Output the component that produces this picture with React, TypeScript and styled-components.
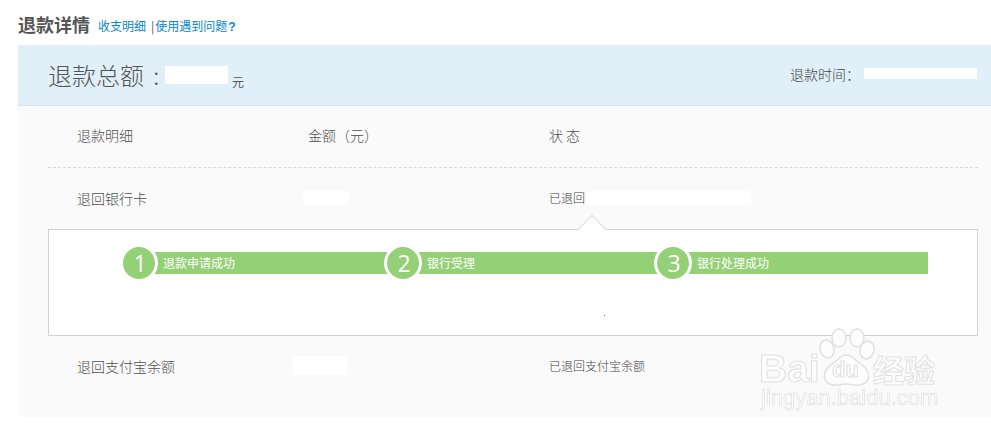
import React from 'react';
import styled, { createGlobalStyle } from 'styled-components';

const GlobalStyle = createGlobalStyle`
  html, body {
    margin: 0;
    padding: 0;
    background: #fff;
  }
  body {
    font-family: "Noto Sans CJK SC", "Liberation Sans", sans-serif;
    color: #666;
    font-size: 12px;
  }
`;

const steps = [
  { num: 1, label: '退款申请成功', width: 264 },
  { num: 2, label: '银行受理', width: 270 },
  { num: 3, label: '银行处理成功', width: 271 },
];

const App: React.FC = () => {
  return (
    <Page>
      <GlobalStyle />
      <TitleBar>
        <Title>退款详情</Title>
        <TitleLink>收支明细</TitleLink>
        <Divider>|</Divider>
        <TitleLink>使用遇到问题<b>?</b></TitleLink>
      </TitleBar>

      <Summary>
        <Total>
          <TotalLabel>退款总额 :</TotalLabel>
          <Mask $w={63} $h={18} $shift={-1} />
          <Unit>元</Unit>
        </Total>
        <Time>
          <span>退款时间：</span>
          <Mask $w={113} $h={11} $shift={4} />
        </Time>
      </Summary>

      <Details>
        <HeadRow>
          <NameCell>退款明细</NameCell>
          <AmountCell>金额（元）</AmountCell>
          <HeadStatus>状 态</HeadStatus>
        </HeadRow>
        <Row>
          <NameCell>退回银行卡</NameCell>
          <AmountCell>
            <Mask $w={46} $h={14} $shift={-5} />
          </AmountCell>
          <StatusCell>
            已退回
            <Mask $w={165} $h={14} $shift={1} />
          </StatusCell>
        </Row>

        <Panel>
          <Arrow />
          <Track>
            {steps.map((s) => (
              <Step key={s.num} $width={s.width}>
                <StepNum>{s.num}</StepNum>
                <StepLabel>{s.label}</StepLabel>
              </Step>
            ))}
          </Track>
          <Speck />
        </Panel>

        <Row>
          <NameCell>退回支付宝余额</NameCell>
          <AmountCell>
            <Mask $w={54} $h={19} $shift={-15} />
          </AmountCell>
          <StatusCell>已退回支付宝余额</StatusCell>
        </Row>
      </Details>

      <Watermark>
        <Paw viewBox="0 0 60 60">
          <g fill="#fdfdfd" stroke="#e0e0e0" strokeWidth="1.5">
            <ellipse cx="21" cy="10" rx="7" ry="9" />
            <ellipse cx="39" cy="10" rx="7" ry="9" />
            <ellipse cx="9" cy="21" rx="7" ry="9" transform="rotate(-15 9 21)" />
            <ellipse cx="49" cy="22" rx="7" ry="9" transform="rotate(15 49 22)" />
            <path d="M28.5 27c6 0 8 5 13 8 6 4 9 8 9 13 0 7-7 10-14 9-5-1-10-2-15 0-8 1-15-2-15-9 0-5 4-10 9-13 5-3 7-8 13-8z" />
          </g>
        </Paw>
        <WmBrand>Bai</WmBrand>
        <WmDu>du</WmDu>
        <WmCn>经验</WmCn>
        <WmUrl>jingyan.baidu.com</WmUrl>
      </Watermark>
    </Page>
  );
};

const Page = styled.div`
  position: relative;
  width: 991px;
  height: 434px;
  overflow: hidden;
  padding-left: 18px;
  box-sizing: border-box;
`;

const TitleBar = styled.div`
  display: flex;
  align-items: center;
  height: 45px;
  padding-top: 2px;
  box-sizing: border-box;
`;

const Title = styled.h1`
  margin: 0 8px 0 0;
  font-size: 18px;
  font-weight: 700;
  color: #555;
`;

const TitleLink = styled.a`
  font-size: 12px;
  color: #0886c4;
  padding-top: 3px;

  b {
    font-family: "Liberation Sans", sans-serif;
    margin-left: 1px;
  }
`;

const Divider = styled.span`
  font-size: 12px;
  color: #555;
  margin: 0 1px 0 5px;
  padding-top: 3px;
`;

const Summary = styled.div`
  display: flex;
  align-items: center;
  justify-content: space-between;
  height: 61px;
  padding: 0 14px 0 30px;
  background: #e1eff9;
  border-bottom: 1px solid #d4e2ee;
  box-sizing: border-box;
`;

const Total = styled.div`
  display: flex;
  align-items: center;
`;

const TotalLabel = styled.span`
  font-size: 24px;
  font-weight: 300;
  line-height: 32px;
  color: #555;
  width: 118px;
  white-space: nowrap;
  word-spacing: 4px;
`;

const Unit = styled.span`
  font-size: 12px;
  color: #555;
  margin: 12px 0 0 4px;
`;

const Time = styled.div`
  display: flex;
  align-items: center;
  font-size: 14px;
  font-weight: 300;
  color: #444;
  margin-top: -3px;
`;

const Mask = styled.span<{ $w: number; $h: number; $shift: number }>`
  display: inline-block;
  flex: none;
  width: ${(p) => p.$w}px;
  height: ${(p) => p.$h}px;
  margin-left: ${(p) => p.$shift}px;
  background: #fff;
`;

const Details = styled.div`
  height: 311px;
  padding: 0 13px 0 30px;
  background: #fafafa;
`;

const Row = styled.div`
  display: flex;
  align-items: center;
  height: 61px;
  padding: 0 0 2px 29px;
  box-sizing: border-box;
`;

const HeadRow = styled(Row)`
  height: 62px;
  padding-bottom: 3px;
  border-bottom: 1px dashed #d9d9d9;
`;

const NameCell = styled.div`
  width: 231px;
  font-size: 14px;
  font-weight: 300;
  color: #505050;
`;

const AmountCell = styled.div`
  display: flex;
  align-items: center;
  width: 241px;
  font-size: 14px;
  font-weight: 300;
  color: #505050;
`;

const StatusCell = styled.div`
  display: flex;
  align-items: center;
  font-size: 12px;
  font-weight: 300;
  color: #444;
`;

const HeadStatus = styled(StatusCell)`
  font-size: 14px;
  color: #505050;
`;

const Panel = styled.div`
  position: relative;
  height: 107px;
  padding: 18px 49px 0 74px;
  background: #fff;
  border: 1px solid #d2d2d2;
  box-sizing: border-box;
`;

const Arrow = styled.span`
  position: absolute;
  left: 533px;
  top: -11px;
  width: 19px;
  height: 19px;
  background: #fff;
  border-top: 1px solid #dcdcdc;
  border-left: 1px solid #dcdcdc;
  transform: rotate(45deg);
`;

const Track = styled.div`
  display: flex;
`;

const Step = styled.div<{ $width: number }>`
  display: flex;
  align-items: center;
  width: ${(p) => p.$width}px;
  height: 22px;
  margin-top: 4px;
  background: #94d076;

  &:first-child {
    background: linear-gradient(to right, transparent 16px, #94d076 16px);
  }
`;

const StepNum = styled.span`
  display: flex;
  align-items: center;
  justify-content: center;
  flex: none;
  width: 32px;
  height: 32px;
  margin: -5px 0;
  padding-left: 2px;
  box-sizing: border-box;
  border-radius: 50%;
  background: #94d076;
  box-shadow: 0 0 0 3px #fff;
  color: #fff;
  font-family: "Open Sans", "Liberation Sans", sans-serif;
  font-size: 23px;
  line-height: 1;
`;

const StepLabel = styled.span`
  margin: -2px 0 0 8px;
  color: #fff;
  font-size: 12px;
  font-weight: 400;
`;

const Speck = styled.i`
  position: absolute;
  left: 555px;
  top: 85px;
  width: 1px;
  height: 1px;
  background: #666;
`;

const Watermark = styled.div`
  position: absolute;
  left: 758px;
  top: 326px;
  width: 182px;
  height: 90px;
  filter: blur(0.3px);
  pointer-events: none;
`;

const Paw = styled.svg`
  position: absolute;
  left: 60px;
  top: 2px;
  width: 60px;
  height: 60px;
`;

const wmText = `
  position: absolute;
  color: #fdfdfd;
  -webkit-text-stroke: 1px #e0e0e0;
  font-family: "Liberation Sans", sans-serif;
  font-weight: 700;
  line-height: 1;
`;

const WmBrand = styled.span`
  ${wmText}
  left: 1px;
  top: 23px;
  font-size: 39px;
`;

const WmDu = styled.span`
  ${wmText}
  left: 74px;
  top: 33px;
  font-size: 22px;
`;

const WmCn = styled.span`
  ${wmText}
  left: 115px;
  top: 27px;
  font-family: "Noto Sans CJK SC", sans-serif;
  font-size: 31px;
`;

const WmUrl = styled.span`
  ${wmText}
  left: 3px;
  top: 61px;
  font-size: 22px;
  font-weight: 400;
  -webkit-text-stroke: 0.6px #dcdcdc;
`;

export default App;
